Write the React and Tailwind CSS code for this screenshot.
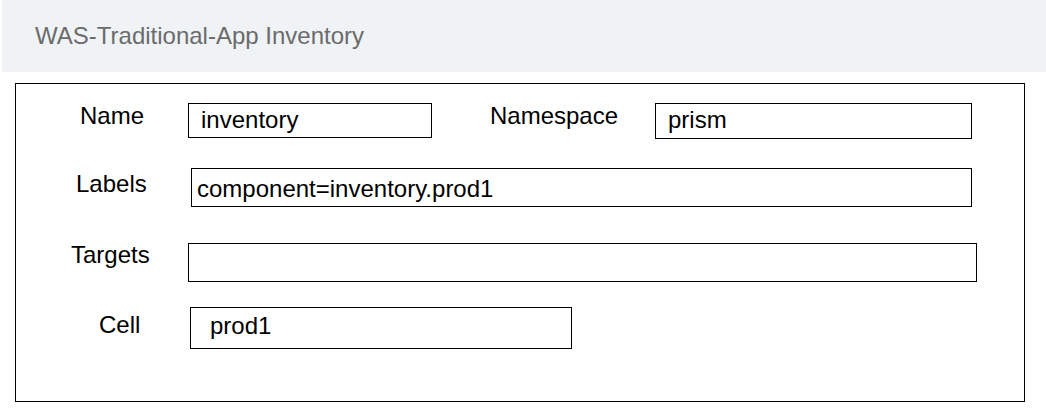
const Field = ({ value, className }) => (
  <div className={`border border-black bg-white leading-none whitespace-nowrap ${className}`}>
    {value}
  </div>
);

export default function App() {
  return (
    <div
      className="w-[1046px] h-[411px] bg-white text-black overflow-hidden"
      style={{ fontFamily: '"Liberation Sans", Arial, sans-serif' }}
    >
      <div className="ml-[2px] h-[72px] bg-[#f0f3f6] pl-[33px] pt-[24px]">
        <h1 className="text-[24px] leading-none text-[#6b6b6b]">WAS-Traditional-App Inventory</h1>
      </div>

      <div className="ml-[15px] mt-[11px] w-[1010px] h-[319px] border border-black pt-[19px] text-[24px]">
        {/* name + namespace */}
        <div className="flex items-start">
          <div className="w-[172px] pl-[64px] pt-[1px] leading-none">Name</div>
          <Field value="inventory" className="w-[244px] h-[35px] pl-[12px] pt-[4px]" />
          <div className="w-[223px] pl-[58px] pt-[1px] leading-none">Namespace</div>
          <Field value="prism" className="w-[317px] h-[36px] pl-[12px] pt-[4px]" />
        </div>

        {/* labels */}
        <div className="flex items-start mt-[29px]">
          <div className="w-[175px] pl-[60px] pt-[4px] leading-none">Labels</div>
          <Field value="component=inventory.prod1" className="w-[781px] h-[39px] pl-[5px] pt-[8px]" />
        </div>

        {/* targets */}
        <div className="flex items-start mt-[36px]">
          <div className="w-[172px] pl-[55px] leading-none">Targets</div>
          <Field value="" className="w-[789px] h-[39px]" />
        </div>

        {/* cell */}
        <div className="flex items-start mt-[25px]">
          <div className="w-[174px] pl-[83px] pt-[6px] leading-none">Cell</div>
          <Field value="prod1" className="w-[382px] h-[42px] pl-[19px] pt-[6px]" />
        </div>
      </div>
    </div>
  );
}
